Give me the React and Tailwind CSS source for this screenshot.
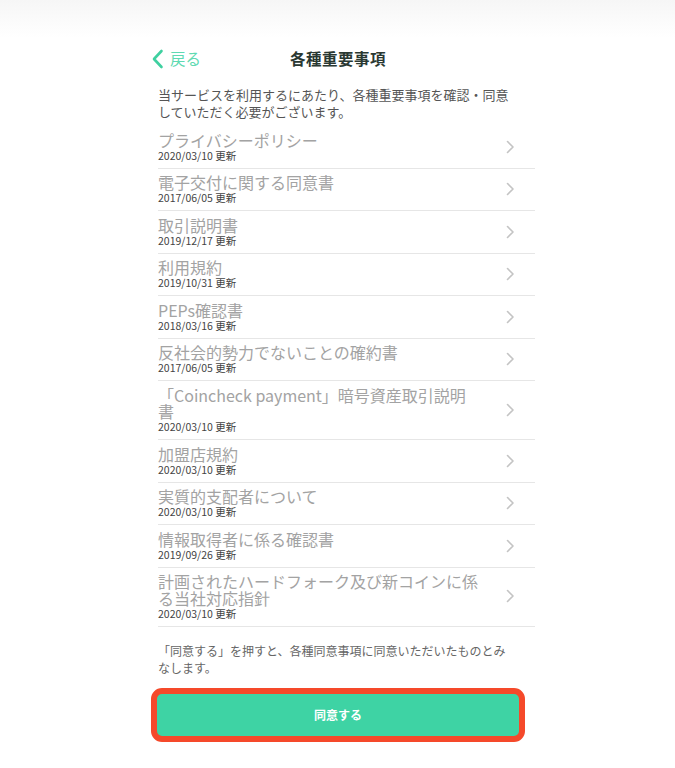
import React from "react";

const items = [
  { t: ["プライバシーポリシー"], d: "2020/03/10" },
  { t: ["電子交付に関する同意書"], d: "2017/06/05" },
  { t: ["取引説明書"], d: "2019/12/17" },
  { t: ["利用規約"], d: "2019/10/31" },
  { t: ["PEPs確認書"], d: "2018/03/16" },
  { t: ["反社会的勢力でないことの確約書"], d: "2017/06/05" },
  { t: ["「Coincheck payment」暗号資産取引説明", "書"], d: "2020/03/10" },
  { t: ["加盟店規約"], d: "2020/03/10" },
  { t: ["実質的支配者について"], d: "2020/03/10" },
  { t: ["情報取得者に係る確認書"], d: "2019/09/26" },
  { t: ["計画されたハードフォーク及び新コインに係", "る当社対応指針"], d: "2020/03/10" },
];

function Chevron() {
  return (
    <svg width="10" height="14" viewBox="0 0 10 14" className="shrink-0">
      <path d="M2.5 1.5 L8 7 L2.5 12.5" fill="none" stroke="#c4c4c4" strokeWidth="1.6" strokeLinecap="round" strokeLinejoin="round" />
    </svg>
  );
}

export default function App() {
  return (
    <div
      className="w-[675px] h-[768px] bg-[linear-gradient(to_bottom,#f6f6f6,#ffffff_38px)] overflow-hidden"
      style={{ fontFamily: '"Noto Sans CJK JP", "Noto Sans", sans-serif' }}
    >
      <div className="ml-[150px] w-[385px] pt-[44px] flex flex-col">
        {/* header */}
        <div className="w-[376px] h-[30px] grid grid-cols-[1fr_auto_1fr] items-center">
          <div className="flex items-center">
            <svg width="14" height="20" viewBox="0 0 14 20" className="ml-[1px]">
              <path d="M10.5 2 L3 10 L10.5 18" fill="none" stroke="#3fd0a0" strokeWidth="2.6" strokeLinecap="round" strokeLinejoin="round" />
            </svg>
            <span className="ml-[5px] text-[15.5px] leading-none text-[#5fdab2]">戻る</span>
          </div>
          <div className="text-[15.5px] font-bold text-[#2a3832] leading-none tracking-[0.5px]">各種重要事項</div>
          <div />
        </div>

        {/* description */}
        <p className="mt-[12px] pl-[8px] pr-[20px] text-[13px] leading-[17px] text-[#555]">
          当サービスを利用するにあたり、各種重要事項を確認・同意していただく必要がございます。
        </p>

        {/* list */}
        <ul className="mt-[6px] ml-[8px] w-[377px]">
          {items.map((it, i) => (
            <li key={i} className="flex items-center border-b border-[#e6e6e6] pt-[5.5px] pb-[6px]">
              <div className="flex-1 min-w-0 pr-[16px]">
                {it.t.map((line, j) => (
                  <div key={j} className="text-[16px] leading-[16.5px] text-[#a3a3a3] whitespace-nowrap">{line}</div>
                ))}
                <div className="text-[10.5px] leading-[12px] mt-[1.5px] text-[#444]">{it.d} 更新</div>
              </div>
              <div className="mr-[20px]">
                <Chevron />
              </div>
            </li>
          ))}
        </ul>

        {/* footer */}
        <p className="mt-[15px] pl-[8px] pr-[24px] text-[12px] leading-[17px] text-[#666]">
          「同意する」を押すと、各種同意事項に同意いただいたものとみなします。
        </p>

        <button className="mt-[12px] ml-[1px] w-[374px] h-[54px] rounded-[11px] border-[6px] border-[#f5492a] bg-[#3ed3a4] text-white text-[12px] font-bold flex items-center justify-center">
          同意する
        </button>
      </div>
    </div>
  );
}
